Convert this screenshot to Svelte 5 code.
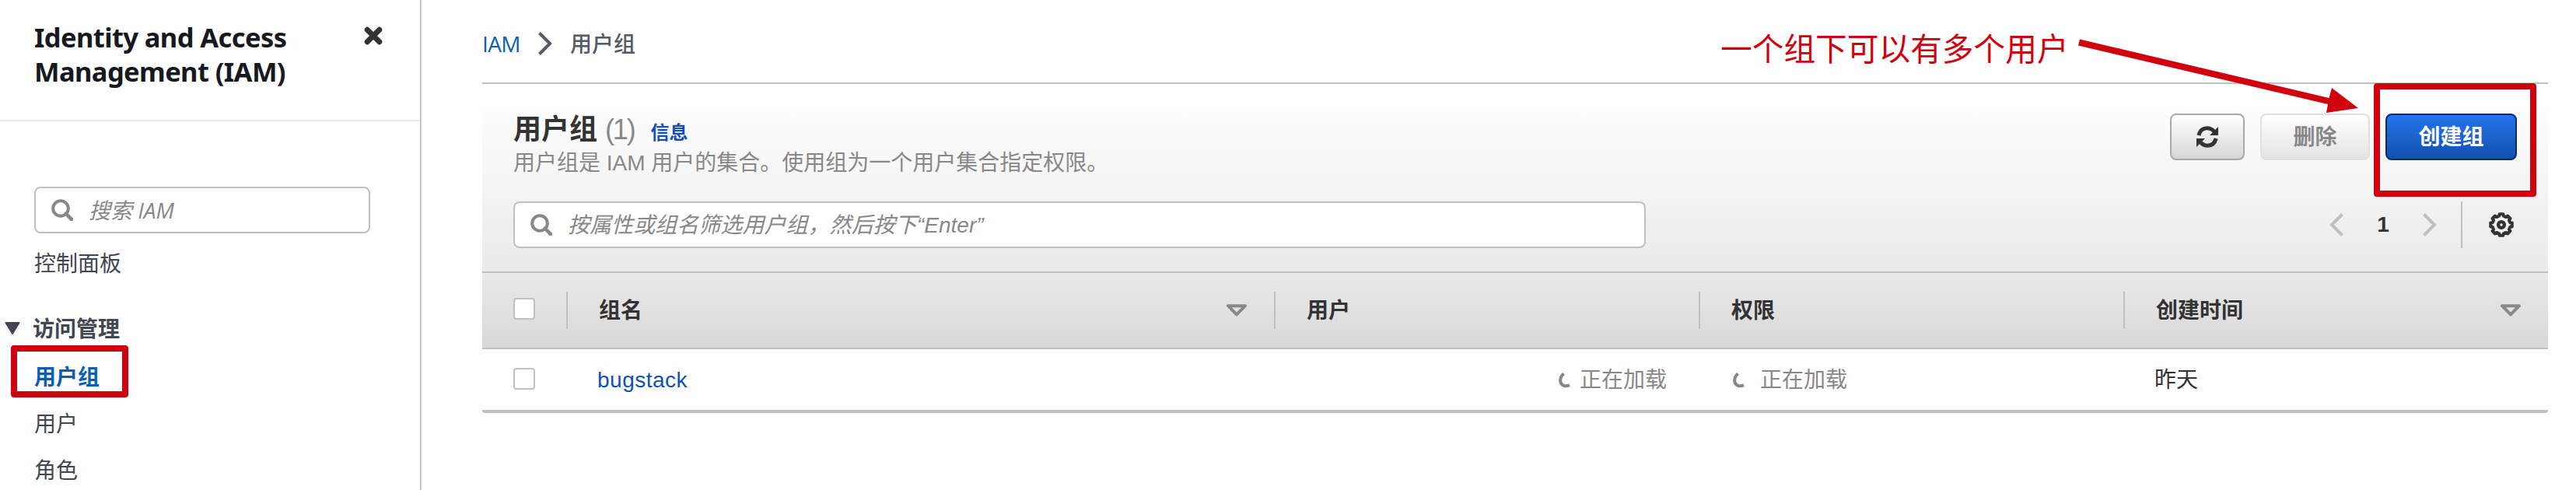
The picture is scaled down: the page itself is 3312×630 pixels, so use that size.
<script>
  const columns = [
    { label: '组名', width: 910, sortable: true },
    { label: '用户', width: 546, sortable: false },
    { label: '权限', width: 546, sortable: false },
    { label: '创建时间', width: 546, sortable: true }
  ];
  const links = ['用户', '角色'];

  // Eight-toothed outline centred on (16, 16).
  const teeth = [];
  for (let k = 0; k < 8; k++) {
    for (const [offset, radius] of [[-14, 11.6], [-10, 14], [10, 14], [14, 11.6]]) {
      const angle = ((k * 45 + offset) * Math.PI) / 180;
      teeth.push(`${(16 + radius * Math.sin(angle)).toFixed(2)},${(16 - radius * Math.cos(angle)).toFixed(2)}`);
    }
  }
  const gearPoints = teeth.join(' ');
</script>

{#snippet magnifier()}
  <svg class="magnifier" viewBox="0 0 28 28" fill="none" stroke="#888" stroke-width="4">
    <circle cx="12" cy="12" r="9.8" />
    <path d="M18.6 18.6 L26 26" stroke-width="4.6" stroke-linecap="round" />
  </svg>
{/snippet}

{#snippet sortIcon()}
  <svg class="sort" viewBox="0 0 28 16" fill="none" stroke="#888" stroke-width="4" stroke-linejoin="round">
    <path d="M3 2.2 H25 L14 13.4 Z" />
  </svg>
{/snippet}

{#snippet spinner()}
  <svg class="spinner" viewBox="0 0 16 20" fill="none" stroke="#888" stroke-width="4">
    <path d="M6.6 1.4 C0.8 6 0.6 14.6 6.6 16.8 C9 17.7 11.8 17.2 14 16" />
  </svg>
{/snippet}

<div class="page">
  <aside>
    <header>
      <h2>Identity and Access<br />Management (IAM)</h2>
      <svg class="close" viewBox="0 0 24 24" stroke="#333" stroke-width="7" stroke-linecap="round">
        <path d="M4.2 4.2 L19.8 19.8 M19.8 4.2 L4.2 19.8" />
      </svg>
    </header>
    <div class="search side-search">{@render magnifier()}<span>搜索 IAM</span></div>
    <nav>
      <a class="item">控制面板</a>
      <div class="section">
        <svg class="caret" viewBox="0 0 20 16"><path d="M1.5 1 H18.5 L10 15 Z" fill="#414750" stroke="#414750" stroke-width="2" stroke-linejoin="round" /></svg>
        <span>访问管理</span>
      </div>
      <a class="item active"><span>用户组</span><i class="mark mark-nav"></i></a>
      {#each links as link}
        <a class="item">{link}</a>
      {/each}
    </nav>
  </aside>

  <main>
    <div class="crumbs">
      <a>IAM</a>
      <svg class="crumb-arrow" viewBox="0 0 18 30" fill="none" stroke="#545b64" stroke-width="4"><path d="M1.5 1.5 L15 15 L1.5 28.5" /></svg>
      <span>用户组</span>
    </div>

    <section class="card">
      <div class="top">
        <div class="heading">
          <div class="titles">
            <h1>用户组 <em>(1)</em><a>信息</a></h1>
            <p>用户组是 IAM 用户的集合。使用组为一个用户集合指定权限。</p>
          </div>
          <div class="actions">
            <button class="btn refresh" aria-label="refresh">
              <svg viewBox="0 0 28 28" fill="none" stroke="#333" stroke-width="5">
                <path d="M2.8 12 C4.5 5.5 9 2.8 13.6 2.8 C17.6 2.8 20.5 4.4 23 7.4" />
                <path d="M25.2 16 C23.5 22.5 19 25.2 14.4 25.2 C10.4 25.2 7.5 23.6 5 20.6" />
                <path d="M28 1 V12 H17 Z M0 27 V16 H11 Z" fill="#333" stroke="none" />
              </svg>
            </button>
            <button class="btn disabled">删除</button>
            <button class="btn primary">创建组<i class="mark mark-create"></i></button>
          </div>
        </div>
        <div class="filters">
          <div class="search filter">{@render magnifier()}<span>按属性或组名筛选用户组，然后按下“Enter”</span></div>
          <div class="pager">
            <svg class="chev" viewBox="0 0 18 30" fill="none" stroke="#c0c0c0" stroke-width="4"><path d="M16.5 1.5 L3 15 L16.5 28.5" /></svg>
            <b>1</b>
            <svg class="chev" viewBox="0 0 18 30" fill="none" stroke="#c0c0c0" stroke-width="4"><path d="M1.5 1.5 L15 15 L1.5 28.5" /></svg>
            <span class="rule"></span>
            <svg class="gear" viewBox="0 0 32 32" fill="none" stroke="#333" stroke-width="4">
              <polygon points={gearPoints} stroke-linejoin="round" />
              <circle cx="16" cy="16" r="3.9" stroke-width="4.4" />
            </svg>
          </div>
        </div>
      </div>

      <div class="row head">
        <div class="check"><i class="box"></i></div>
        {#each columns as col}
          <div class="cell" style="width: {col.width}px">
            <span>{col.label}</span>
            {#if col.sortable}{@render sortIcon()}{/if}
          </div>
        {/each}
      </div>
      <div class="row body">
        <div class="check"><i class="box"></i></div>
        <div class="cell" style="width: 910px"><a>bugstack</a></div>
        <div class="cell loading right" style="width: 546px">{@render spinner()}<span>正在加载</span></div>
        <div class="cell loading left" style="width: 546px">{@render spinner()}<span>正在加载</span></div>
        <div class="cell" style="width: 546px"><span>昨天</span></div>
      </div>
    </section>
  </main>

  <div class="note">一个组下可以有多个用户</div>
  <svg class="arrow" viewBox="0 0 364 100">
    <path d="M5 2.5 L325.5 78 L329 65 L363 91 L322 97 L324 86 L3 10.5 Z" fill="#d0020e" />
  </svg>
</div>

<style>
  :global(body) { background: #fff; overflow: hidden; }
  .page {
    position: relative;
    display: flex;
    width: 3312px;
    height: 630px;
    overflow: hidden;
    background: #fefefe;
    font-family: 'Liberation Sans', 'Noto Sans CJK SC', sans-serif;
    font-size: 28px;
    line-height: 40px;
    color: #333;
  }
  a { text-decoration: none; }
  svg { display: block; flex: none; }

  aside {
    box-sizing: border-box;
    width: 541px;
    flex: none;
    border-right: 1px solid #b4bbbf;
    box-shadow: 1px 0 1px #d5dadd;
    font-family: 'Open Sans', 'Noto Sans CJK SC', sans-serif;
    color: #414750;
  }
  header {
    display: flex;
    justify-content: space-between;
    box-sizing: border-box;
    height: 156px;
    padding: 26px 48px 0 44px;
    border-bottom: 2px solid #e7eaea;
  }
  h2 {
    margin: 0;
    font: 700 34.5px/44px 'Noto Sans', sans-serif;
    letter-spacing: -0.6px;
    color: #16191f;
  }
  .close { width: 24px; height: 24px; margin-top: 8px; }
  .search {
    display: flex;
    align-items: center;
    box-sizing: border-box;
    height: 60px;
    padding-left: 20px;
    border: 2px solid #c0c0c0;
    border-radius: 8px;
    background: #fff;
    font-style: italic;
    color: #888;
  }
  .search span { margin-left: 20px; white-space: nowrap; }
  .magnifier { width: 28px; height: 28px; }
  .side-search { width: 432px; margin: 84px 0 0 44px; }
  nav { padding-top: 8px; }
  .item { display: flex; align-items: center; position: relative; height: 60px; padding-left: 44px; }
  .section { display: flex; align-items: center; height: 60px; margin: 24px 0 2px; padding-left: 6px; font-weight: 700; }
  .section span { margin-left: 16px; }
  .caret { width: 20px; height: 16px; }
  .active { font-weight: 700; color: #0a5fb4; }
  .mark { position: absolute; box-sizing: border-box; border: 8px solid #d0020e; border-radius: 4px; }
  .mark-nav { left: 14px; top: -10px; width: 151px; height: 67px; }

  main { width: 2656px; flex: none; margin-left: 79px; }
  .crumbs {
    display: flex;
    align-items: center;
    box-sizing: border-box;
    height: 106px;
    padding-top: 6px;
    font-family: 'Open Sans', 'Noto Sans CJK SC', sans-serif;
    font-weight: 500;
    color: #545b64;
  }
  .crumbs a { width: 72px; letter-spacing: -0.6px; color: #0a5fb4; }
  .crumb-arrow { width: 18px; height: 30px; margin-right: 23px; }
  .top {
    box-sizing: border-box;
    height: 243px;
    padding: 38px 40px 0;
    border-top: 2px solid #c0c0c0;
    background: linear-gradient(#fff, #fefefe 10%, #eaeaea);
  }
  .heading { display: flex; justify-content: space-between; height: 113px; }
  h1 { margin: 0; height: 42px; font-size: 36px; line-height: 42px; font-weight: 700; white-space: pre; }
  h1 em { font-style: normal; font-weight: 400; letter-spacing: -2.2px; color: #888; }
  h1 a { margin-left: 21px; font-size: 24px; color: #1150b4; }
  p { margin: 2px 0 0; color: #888; }
  .actions { display: flex; gap: 20px; }
  .btn {
    position: relative;
    box-sizing: border-box;
    height: 60px;
    padding: 2px 0 0;
    border: 2px solid #a9a9a9;
    border-radius: 8px;
    font: inherit;
    font-weight: 700;
    background: linear-gradient(#fff, #d6d6d6);
  }
  .refresh { width: 96px; padding: 0; }
  .refresh svg { width: 28px; height: 28px; margin: 0 auto; }
  .disabled { width: 141px; border-color: #e0e0e0; color: #888; background: linear-gradient(#fff, #e3e3e3); }
  .primary { width: 169px; border-color: #0b2c5e; color: #fff; background: linear-gradient(#2474ea, #1150b0); }
  .mark-create { left: -17px; top: -41px; width: 209px; height: 146px; }
  .filters { display: flex; justify-content: space-between; height: 60px; }
  .filter { width: 1456px; }
  .filter span { padding-top: 1px; letter-spacing: 0.05px; }
  .pager { display: flex; align-items: center; margin-right: 4px; }
  .chev { width: 18px; height: 30px; }
  .pager b { width: 102px; text-align: center; }
  .rule { width: 2px; height: 60px; margin: 0 34px 0 31px; background: #c0c0c0; }
  .gear { width: 32px; height: 32px; }

  .row { display: flex; align-items: center; box-sizing: border-box; }
  .head {
    height: 100px;
    border-top: 2px solid #c0c0c0;
    border-bottom: 2px solid #c0c0c0;
    background: linear-gradient(#eaeaea, #d8d8d8);
    font-weight: 700;
  }
  .body { height: 82px; border-bottom: 4px solid #c0c1c0; border-radius: 0 0 3px 3px; }
  .check { width: 108px; flex: none; }
  .box { display: block; box-sizing: border-box; width: 28px; height: 28px; margin-left: 40px; border: 2px solid #c0c0c0; border-radius: 4px; background: #fff; }
  .cell { display: flex; align-items: center; justify-content: space-between; box-sizing: border-box; flex: 0 1 auto; height: 48px; padding: 0 34px 0 40px; }
  .cell span, .cell a { padding-top: 2px; }
  .head .cell { border-left: 2px solid #c0c0c0; }
  .head .check { margin-top: -4px; }
  .body .check { margin-top: -2px; }
  .sort { width: 28px; height: 16px; }
  .body a { letter-spacing: 0.5px; color: #1150b4; }
  .loading { justify-content: flex-start; color: #888; }
  .loading span { margin-left: 19px; }
  .left { padding-left: 44px; }
  .right { justify-content: flex-end; padding-right: 41px; }
  .right span { margin-left: 11px; }
  .spinner { width: 16px; height: 20px; margin-top: 2px; }

  .note { position: absolute; left: 2212px; top: 34px; font-size: 40.7px; line-height: 60px; color: #d0020e; white-space: nowrap; }
  .arrow { position: absolute; left: 2669px; top: 48px; width: 364px; height: 100px; }
</style>
